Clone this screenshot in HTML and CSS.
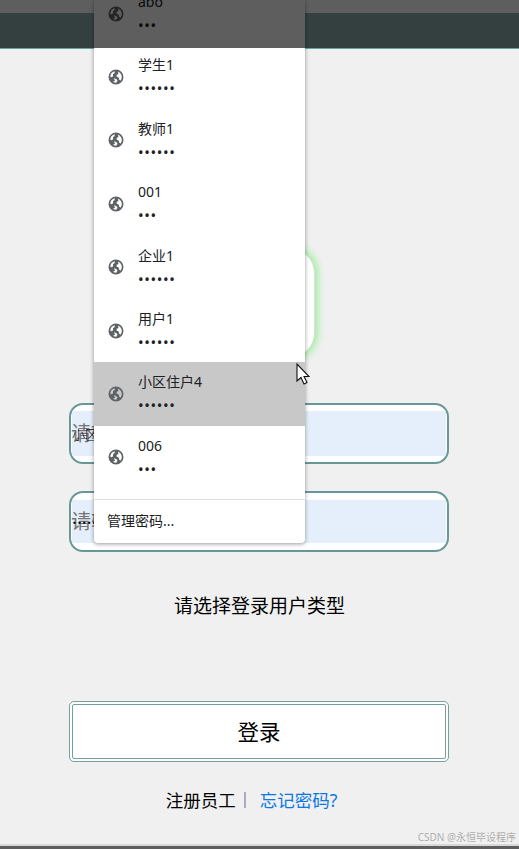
FILE: index.html
```
<!DOCTYPE html>
<html lang="zh-CN">
<head>
  <meta charset="UTF-8" />
  <meta name="viewport" content="width=device-width, initial-scale=1.0"/>
  <title>登录</title>
  <link rel="stylesheet" href="styles.css">
</head>
<body>
  <!-- Shared icon -->
  <svg class="sprite" width="0" height="0">
    <symbol id="globe" viewBox="0 0 16 16">
      <path fill-rule="evenodd" d="M8 .5a7.500 7.500 0 1 0 0 15 7.500 7.500 0 0 0 0-15zM6.800 2.300 6.600 4 5 5.200v2L3.800 8.300 2.200 7.500C2.400 5 4.200 2.800 6.800 2.300zM10 2.600c2.300.9 3.800 3 3.800 5.400 0 1.300-.4 2.500-1.100 3.500l-1.500-.8-.5-2.200L8.500 7.600l.3-1.800 1.700-.9zM5.800 9.200l2.800 1 .9 1.600-1.300 2c-1.200 0-2.300-.4-3.200-1l2.100-1z"/>
    </symbol>
  </svg>

  <div class="page">
    <header class="header"></header>

    <main class="login">
      <div class="logo"></div>

      <form class="form">
        <div class="field">
          <div class="field-fill"><span class="placeholder">请输入账号</span><span class="typed">小区住户4</span></div>
        </div>
        <div class="field field-password">
          <div class="field-fill"><span class="placeholder">请输入密码</span><span class="typed">••••••</span></div>
        </div>
        <p class="type-label">请选择登录用户类型</p>
        <button type="button" class="login-btn">登录</button>
      </form>

      <div class="links">
        <a class="register">注册员工</a>
        <span class="divider"></span>
        <a class="forgot">忘记密码?</a>
      </div>
    </main>

    <footer class="footer"></footer>
  </div>

  <!-- Saved accounts dropdown -->
  <div class="dropdown">
    <ul class="accounts">
      <li class="account">
        <svg class="globe"><use href="#globe"/></svg>
        <div class="info"><span class="name">abo</span><span class="dots">•••</span></div>
      </li>
      <li class="account">
        <svg class="globe"><use href="#globe"/></svg>
        <div class="info"><span class="name">学生1</span><span class="dots">••••••</span></div>
      </li>
      <li class="account">
        <svg class="globe"><use href="#globe"/></svg>
        <div class="info"><span class="name">教师1</span><span class="dots">••••••</span></div>
      </li>
      <li class="account">
        <svg class="globe"><use href="#globe"/></svg>
        <div class="info"><span class="name">001</span><span class="dots">•••</span></div>
      </li>
      <li class="account">
        <svg class="globe"><use href="#globe"/></svg>
        <div class="info"><span class="name">企业1</span><span class="dots">••••••</span></div>
      </li>
      <li class="account">
        <svg class="globe"><use href="#globe"/></svg>
        <div class="info"><span class="name">用户1</span><span class="dots">••••••</span></div>
      </li>
      <li class="account active">
        <svg class="globe"><use href="#globe"/></svg>
        <div class="info"><span class="name">小区住户4</span><span class="dots">••••••</span></div>
      </li>
      <li class="account">
        <svg class="globe"><use href="#globe"/></svg>
        <div class="info"><span class="name">006</span><span class="dots">•••</span></div>
      </li>
    </ul>
    <div class="manage">管理密码...</div>
  </div>

  <!-- Dimmed strip at the top -->
  <div class="shade"></div>

  <svg class="cursor" viewBox="0 0 14 22">
    <path d="M1 1v17l4-3.500 3 6.500 3-1.500-3-6h5z" fill="#fff" stroke="#111" stroke-width="1.100"/>
  </svg>

  <div class="watermark">CSDN @永恒毕设程序</div>
</body>
</html>
```
FILE: styles.css
```
* {
  box-sizing: border-box;
}
body {
  margin: 0;
  position: relative;
  height: 849px;
  overflow: hidden;
  background-color: #f0f0f0;
  font-family: "Noto Sans", "Noto Sans CJK SC", sans-serif;
  color: #000;
}
.sprite {
  position: absolute;
}
.page {
  display: flex;
  flex-direction: column;
  height: 849px;
}
.header {
  height: 49px;
  background-color: #8aafac;
  border-top: 13px solid #fff;
  border-bottom: 1px solid #64a5a4;
}
.login {
  flex: 1;
  display: flex;
  flex-direction: column;
  align-items: center;
  padding-top: 199px;
  padding-right: 1px;
}
.logo {
  width: 112px;
  height: 110px;
  border-radius: 25px;
  background-color: #fff;
  border: 1px solid #ddd;
  box-shadow: 0 0 9px 2px #90ee90;
}
.form {
  width: 380px;
  margin-top: 45px;
}
.field {
  height: 61px;
  padding: 6px 1px;
  border: 2px solid #679896;
  border-radius: 14px;
  background-color: #fff;
}
.field-password {
  margin-top: 27px;
  padding: 7px 1px;
}
/* both texts share one cell, the typed value sits over the placeholder */
.field-fill {
  display: grid;
  align-items: center;
  height: 45px;
  background-color: #e5effc;
}
.field-password .field-fill {
  height: 43px;
}
.placeholder,
.typed {
  grid-area: 1 / 1;
  white-space: nowrap;
}
.placeholder {
  margin-left: -1px;
  font-size: 20px;
  color: #757575;
  line-height: 30px;
}
.typed {
  font-size: 13px;
  font-weight: 300;
}
.type-label {
  margin: 39px 0 0;
  padding-left: 1px;
  font-size: 19px;
  line-height: 30px;
  text-align: center;
}
.login-btn {
  display: block;
  width: 380px;
  height: 61px;
  margin-top: 80px;
  padding: 0 0 2px;
  border: 4px double #76a09e;
  border-radius: 5px;
  background-color: #fff;
  font-family: inherit;
  font-size: 21.500px;
  color: #000;
}
.links {
  display: flex;
  align-items: center;
  margin-top: 23px;
  margin-right: 15px;
  font-size: 17.500px;
  line-height: 30px;
}
.divider {
  width: 2px;
  height: 16px;
  margin: 0 14px 0 8px;
  background-color: #aab;
}
.forgot {
  color: #0b78e3;
}
.footer {
  height: 5px;
  border-top: 2px solid #d8d8d8;
  background-color: #5e5e5e;
}
.dropdown {
  position: absolute;
  top: 0;
  left: 94px;
  width: 211px;
  height: 543px;
  display: flex;
  flex-direction: column;
  justify-content: flex-end;
  overflow: hidden;
  background-color: #fff;
  border-radius: 0 0 4px 4px;
  box-shadow: 0 1px 4px rgba(0, 0, 0, 0.4);
  color: #202124;
}
.accounts {
  flex: none;
  list-style: none;
  margin: 0;
  padding: 0 0 10px;
}
.account {
  display: flex;
  align-items: center;
  height: 63.400px;
  padding-left: 14px;
}
.active {
  background-color: #c8c8c8;
}
.globe {
  width: 16px;
  height: 16px;
  fill: #5f6368;
}
.info {
  display: flex;
  flex-direction: column;
  margin-left: 14px;
  font-size: 14px;
}
.name {
  line-height: 24px;
}
.dots {
  line-height: 23px;
  font-size: 15px;
  letter-spacing: 0.600px;
}
.manage {
  flex: none;
  height: 44px;
  padding-left: 13px;
  border-top: 1px solid #dedede;
  font-size: 14px;
  line-height: 41px;
}
.shade {
  position: absolute;
  top: 0;
  left: 0;
  width: 100%;
  height: 48px;
  background-color: rgba(0, 0, 0, 0.63);
}
.cursor {
  position: absolute;
  top: 363px;
  left: 296px;
  width: 14px;
  height: 22px;
}
.watermark {
  position: absolute;
  right: 3px;
  bottom: 4px;
  font-size: 10px;
  line-height: 15px;
  color: #aaa;
  text-shadow: 0 0 1px #fff;
}
```
